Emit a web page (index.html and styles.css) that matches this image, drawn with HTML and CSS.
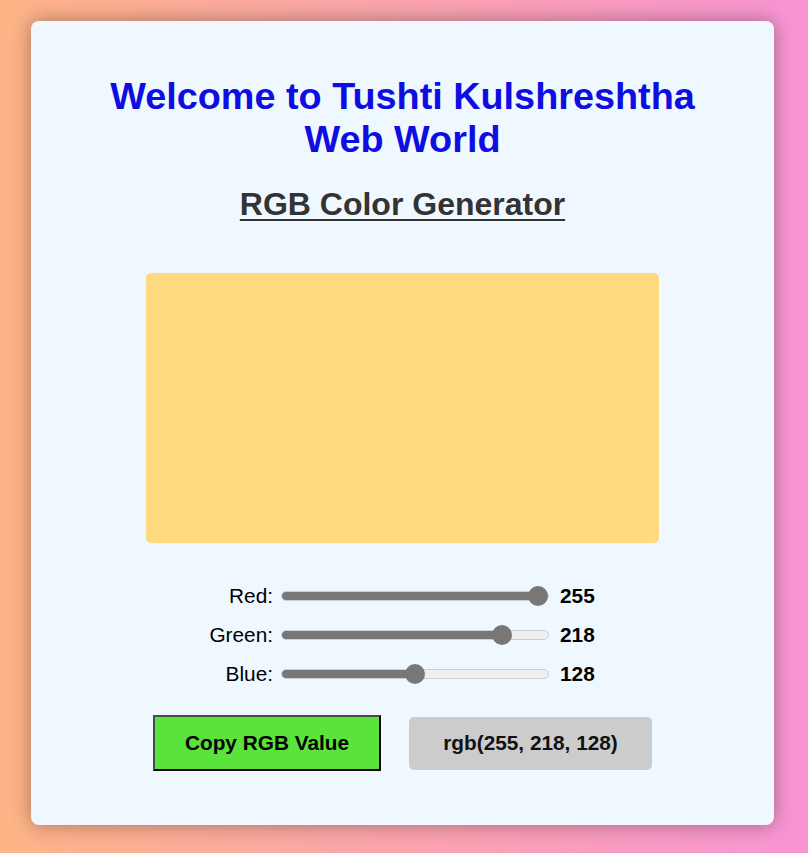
FILE: index.html
```html
<!DOCTYPE html>
<html lang="en">
<head>
<meta charset="utf-8">
<title>RGB Color Generator</title>
<link rel="stylesheet" href="styles.css">
</head>
<body>
<main class="card">
  <h1 class="title">Welcome to Tushti Kulshreshtha Web World</h1>
  <h2 class="subtitle">RGB Color Generator</h2>
  <div class="swatch" style="background-color: rgb(255, 218, 128);"></div>
  <div class="sliders">
    <div class="row">
      <label class="label" for="red">Red:</label>
      <input class="range" id="red" type="range" min="0" max="255" value="255" style="--v: 1;">
      <span class="value">255</span>
    </div>
    <div class="row">
      <label class="label" for="green">Green:</label>
      <input class="range" id="green" type="range" min="0" max="255" value="218" style="--v: 0.8549;">
      <span class="value">218</span>
    </div>
    <div class="row">
      <label class="label" for="blue">Blue:</label>
      <input class="range" id="blue" type="range" min="0" max="255" value="128" style="--v: 0.50196;">
      <span class="value">128</span>
    </div>
  </div>
  <div class="actions">
    <button class="copy" type="button">Copy RGB Value</button>
    <div class="output">rgb(255, 218, 128)</div>
  </div>
</main>
</body>
</html>
```
FILE: styles.css
```css
html, body {
  margin: 0;
  padding: 0;
}
body {
  min-height: 853px;
  background: linear-gradient(to right, #feb486, #f894d4);
  font-family: "Liberation Sans", Arial, sans-serif;
  padding-top: 21px;
  box-sizing: border-box;
  overflow: hidden;
}
.card {
  width: 743px;
  height: 804px;
  margin-left: 31px;
  box-sizing: border-box;
  background: #f0f8ff;
  border-radius: 8px;
  box-shadow: 0 0 20px rgba(0, 0, 0, 0.35);
  padding-top: 54px;
  display: flex;
  flex-direction: column;
  align-items: center;
}
.title {
  margin: 0;
  width: 640px;
  text-align: center;
  font-size: 37.8px;
  line-height: 43px;
  font-weight: bold;
  color: #0e0ee2;
}
.subtitle {
  margin: 25px 0 0;
  font-size: 32px;
  line-height: 37px;
  font-weight: bold;
  color: #333;
  text-decoration: underline;
  text-decoration-thickness: 2px;
  text-underline-offset: 4px;
}
.swatch {
  margin-top: 50px;
  width: 513px;
  height: 270px;
  border-radius: 5px;
}
.sliders {
  margin-top: 41px;
  display: flex;
  flex-direction: column;
  gap: 15px;
}
.row {
  display: flex;
  align-items: center;
  height: 24px;
}
.label {
  width: 68px;
  text-align: right;
  font-size: 20.8px;
  color: #000;
}
.range {
  -webkit-appearance: none;
  appearance: none;
  width: 268px;
  height: 10px;
  margin: 0 11px 0 8px;
  padding: 0;
  border: 1px solid #cfcfcf;
  border-radius: 5px;
  box-sizing: border-box;
  background: linear-gradient(to right, #777 calc(9px + (100% - 18px) * var(--v)), #efefef 0);
}
.range::-webkit-slider-thumb {
  -webkit-appearance: none;
  appearance: none;
  width: 20px;
  height: 20px;
  border-radius: 50%;
  background: #777;
  border: none;
}
.value {
  width: 40px;
  font-size: 20.8px;
  font-weight: bold;
  color: #000;
}
.actions {
  margin-top: 29px;
  display: flex;
  align-items: center;
  gap: 28px;
}
.copy {
  width: 228px;
  height: 56px;
  box-sizing: border-box;
  background: #5ae33b;
  border: 2px solid #000;
  border-top-color: #4a4a4a;
  border-left-color: #4a4a4a;
  border-radius: 0;
  font-family: "Liberation Sans", Arial, sans-serif;
  font-size: 20.8px;
  font-weight: bold;
  color: #000;
  padding: 0;
}
.output {
  width: 243px;
  height: 53px;
  box-sizing: border-box;
  background: #cccccc;
  border-radius: 5px;
  display: flex;
  align-items: center;
  justify-content: center;
  font-size: 20.8px;
  font-weight: bold;
  color: #111;
}
```
